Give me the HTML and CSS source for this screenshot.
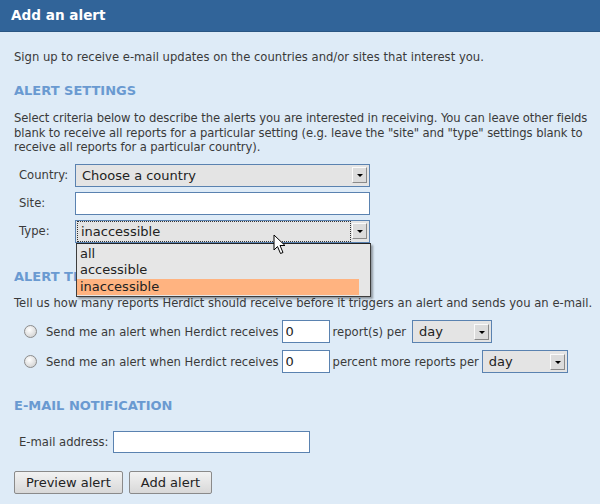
FILE: index.html
```html
<!DOCTYPE html>
<html lang="en">
  <head>
    <link rel="stylesheet" href="styles.css">
  </head>
  <body>
    <div class="panel">
      <h1 class="panel-title">Add an alert</h1>

      <div class="panel-body">
        <p class="intro">Sign up to receive e-mail updates on the countries and/or sites that interest you.</p>

        <h2 class="section-title">ALERT SETTINGS</h2>
        <p class="help settings-help">Select criteria below to describe the alerts you are interested in receiving. You can leave other fields blank to receive all reports for a particular setting (e.g. leave the "site" and "type" settings blank to receive all reports for a particular country).</p>

        <div class="criteria">
          <span class="label">Country:</span>
          <div class="select wide">
            <span class="select-text">Choose a country</span>
            <span class="select-arrow"></span>
          </div>

          <span class="label">Site:</span>
          <input class="text wide" type="text">

          <span class="label">Type:</span>
          <div class="select wide open">
            <span class="select-text focused">inaccessible</span>
            <span class="select-arrow"></span>
            <!-- open list of the type select -->
            <ul class="select-list">
              <li>all</li>
              <li>accessible</li>
              <li class="hover">inaccessible</li>
            </ul>
            <svg class="cursor" width="14" height="22" viewBox="0 0 14 22">
              <path d="M1 1 L1 16 L4.5 12.5 L7.5 19.5 L10 18.5 L7 11.5 L12 11.5 Z" fill="#fff" stroke="#000" stroke-width="1" stroke-linejoin="round"/>
            </svg>
          </div>
        </div>

        <h2 class="section-title triggers-title">ALERT TRIGGERS</h2>
        <p class="help">Tell us how many reports Herdict should receive before it triggers an alert and sends you an e-mail.</p>

        <div class="trigger">
          <span class="radio"></span>
          <span>Send me an alert when Herdict receives</span>
          <input class="text small" type="text" value="0">
          <span class="per">report(s) per</span>
          <div class="select period">
            <span class="select-text">day</span>
            <span class="select-arrow"></span>
          </div>
        </div>
        <div class="trigger">
          <span class="radio"></span>
          <span>Send me an alert when Herdict receives</span>
          <input class="text small" type="text" value="0">
          <span>percent more reports per</span>
          <div class="select period long">
            <span class="select-text">day</span>
            <span class="select-arrow"></span>
          </div>
        </div>

        <h2 class="section-title email-title">E-MAIL NOTIFICATION</h2>
        <div class="email-row">
          <span class="label">E-mail address:</span>
          <input class="text email" type="text">
        </div>

        <div class="buttons">
          <button class="btn">Preview alert</button>
          <button class="btn">Add alert</button>
        </div>
      </div>
    </div>
  </body>
</html>
```

FILE: styles.css
```css
body {
  margin: 0;
  background-color: #deebf7;
  font-family: "DejaVu Sans", Verdana, sans-serif;
  font-size: 11.6px;
  color: #3a3a3a;
}

.panel-title {
  margin: 0;
  height: 31px;
  line-height: 31px;
  padding-left: 11px;
  background-color: #316499;
  border-bottom: 1px solid #2a5683;
  color: #fff;
  font-size: 13.6px;
  font-weight: bold;
}

.panel-body {
  padding: 14px 4px 0 14px;
}

.intro {
  margin: 4px 0 0 0;
  line-height: 14px;
}

.section-title {
  margin: 19px 0 0 0;
  font-size: 13px;
  font-weight: bold;
  color: #6a9ad1;
  line-height: 16px;
}

.help {
  margin: 11px 0 0 0;
  line-height: 14.5px;
}

.settings-help {
  margin-top: 12px;
  letter-spacing: -0.1px;
}

.criteria {
  display: grid;
  grid-template-columns: 56px 295px;
  row-gap: 5px;
  align-items: center;
  margin: 9px 0 0 5px;
}

.label {
  color: #3a3a3a;
}

.select {
  position: relative;
  display: flex;
  align-items: center;
  box-sizing: border-box;
  height: 23px;
  border: 1px solid #5a82b0;
  background-color: #e4e4e4;
  font-size: 13px;
  color: #222;
}

.select-text {
  flex: 1;
  padding-left: 6px;
  line-height: 19px;
}

.select-text.focused {
  margin: 1px 2px 1px 2px;
  padding-left: 3px;
  outline: 1px dotted #333;
}

.select-arrow {
  width: 15px;
  height: 16px;
  margin-right: 2px;
  box-sizing: border-box;
  border: 1px solid;
  border-color: #fafafa #8a8a8a #8a8a8a #fafafa;
  background-color: #dcdcdc;
  position: relative;
}

.select-arrow::after {
  content: "";
  position: absolute;
  left: 4px;
  top: 6px;
  border-left: 3px solid transparent;
  border-right: 3px solid transparent;
  border-top: 3px solid #000;
}

.select-list {
  position: absolute;
  left: 0;
  top: 22px;
  width: 293px;
  margin: 0;
  padding: 2px 0 1px 0;
  list-style: none;
  background-color: #e6e6e6;
  border: 1px solid #3d3d3d;
  border-top-color: #222;
  box-shadow: 2px 2px 2px rgba(0, 0, 0, 0.35);
  z-index: 2;
}

.select-list li {
  height: 16.5px;
  line-height: 16.5px;
  padding-left: 3px;
  margin-right: 11px;
}

.select-list li.hover {
  background-color: #ffb380;
}

.cursor {
  position: absolute;
  left: 197px;
  top: 13px;
  z-index: 3;
}

.text {
  box-sizing: border-box;
  height: 23px;
  border: 1px solid #5a82b0;
  background-color: #fff;
  font-family: "DejaVu Sans", Verdana, sans-serif;
  font-size: 13px;
  padding: 0 3px;
  color: #222;
}

.triggers-title {
  margin-top: 26px;
}

.triggers-title + .help {
  margin-top: 11px;
}

.trigger {
  display: flex;
  align-items: center;
  gap: 3px;
  margin: 10px 0 0 10px;
  height: 23px;
}

.trigger + .trigger {
  margin-top: 7px;
}

.radio {
  width: 11px;
  height: 11px;
  border-radius: 50%;
  border: 1px solid #8c8c8c;
  background: radial-gradient(circle at 40% 35%, #fff, #c9c9c9);
  margin-right: 6px;
}

.per {
  margin-right: 3px;
}

.small {
  width: 48px;
}

.period {
  width: 80px;
}

.period.long {
  width: 86px;
}

.email-title {
  margin-top: 25px;
}

.email-row {
  display: flex;
  align-items: center;
  gap: 4px;
  margin: 17px 0 0 5px;
}

.email {
  width: 197px;
  height: 22px;
}

.buttons {
  display: flex;
  gap: 6px;
  margin-top: 18px;
}

.btn {
  height: 23px;
  padding: 0 11px;
  border: 1px solid #8a8a8a;
  border-radius: 2px;
  background: linear-gradient(#f2f2f2, #d8d8d8);
  font-family: "DejaVu Sans", Verdana, sans-serif;
  font-size: 13px;
  color: #222;
}
```
